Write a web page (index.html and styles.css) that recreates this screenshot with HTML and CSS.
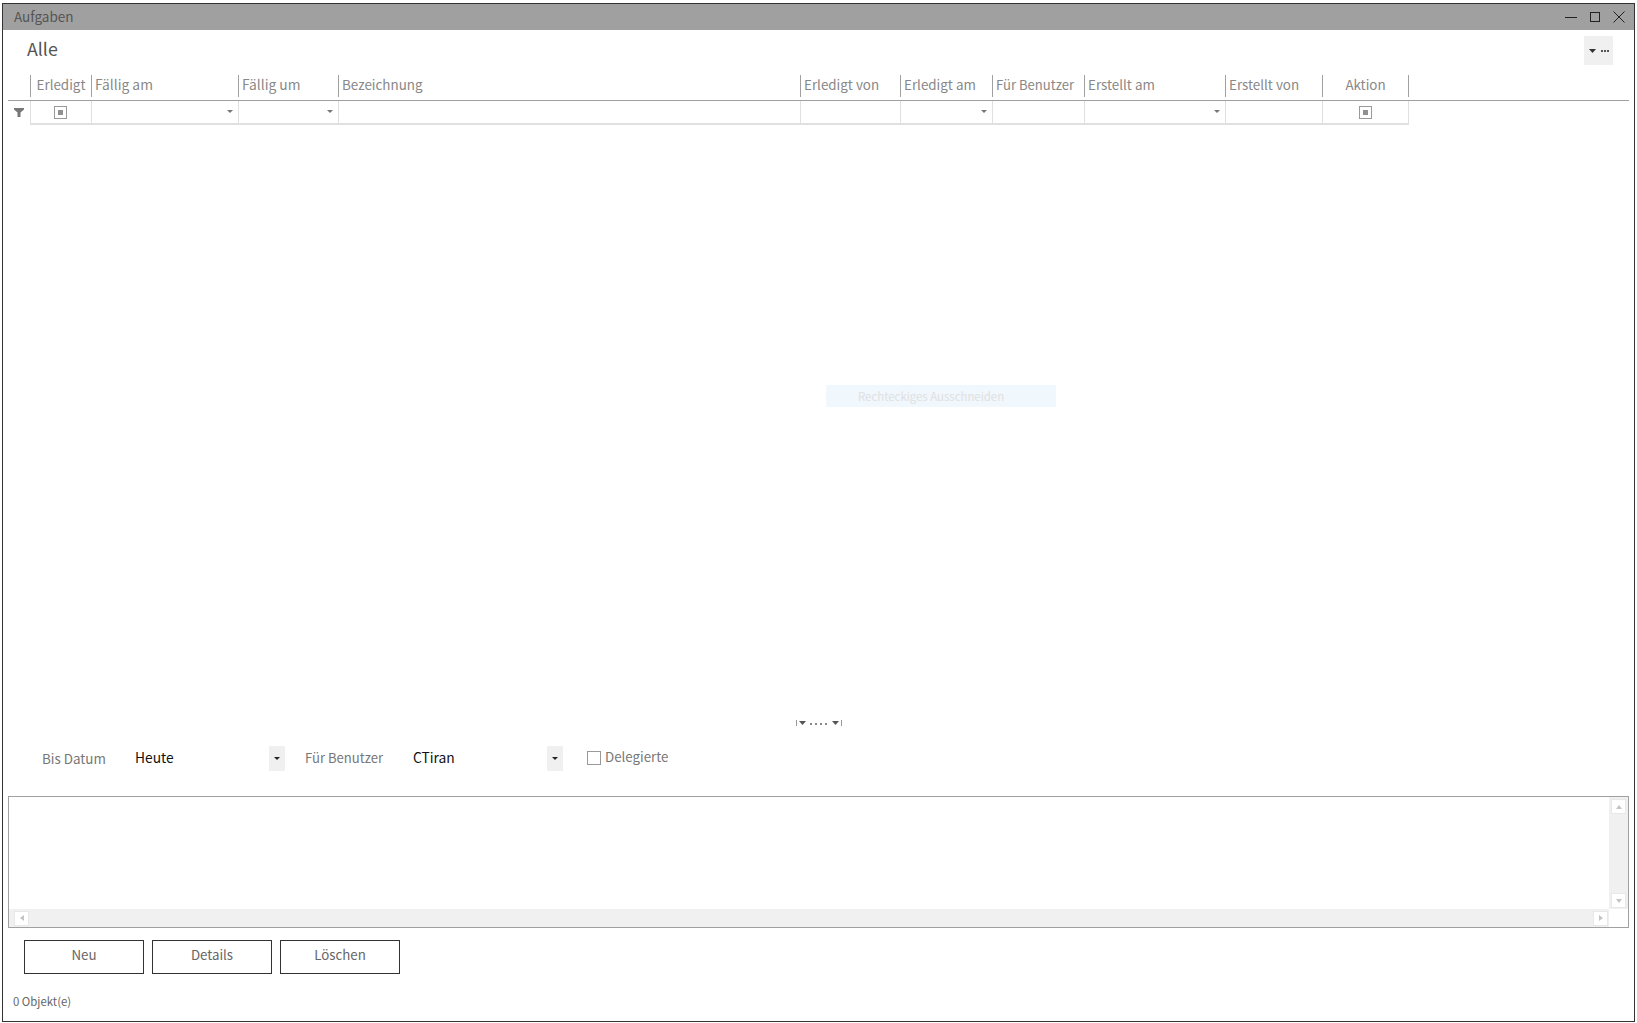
FILE: index.html
```html
<!DOCTYPE html>
<html lang="de">
<head>
    <meta charset="UTF-8">
    <title>Aufgaben</title>
    <link rel="stylesheet" href="styles.css">
</head>
<body>
    <div class="window">
        <div class="titlebar">
            <span class="title">Aufgaben</span>
            <div class="win-buttons">
                <svg width="12" height="12" viewBox="0 0 12 12"><path d="M0 6.500H12" stroke="#222" fill="none"/></svg>
                <svg width="12" height="12" viewBox="0 0 12 12"><rect x="1.500" y="1.500" width="9" height="9" stroke="#222" fill="none"/></svg>
                <svg width="12" height="12" viewBox="0 0 12 12"><path d="M0.500 0.500L11.500 11.500M11.500 0.500L0.500 11.500" stroke="#222" fill="none"/></svg>
            </div>
        </div>

        <div class="view-head">
            <span class="view-name">Alle</span>
            <div class="view-menu">
                <svg width="7" height="4" viewBox="0 0 7 4"><path d="M0 0H7L3.500 4Z" fill="#333"/></svg>
                <svg width="8" height="2" viewBox="0 0 8 2"><path d="M0 0H2V2H0ZM3 0H5V2H3ZM6 0H8V2H6Z" fill="#555"/></svg>
            </div>
        </div>

        <!-- Grid -->
        <div class="grid-area">
            <div class="grid-row grid-header">
                <div class="corner"></div>
                <div class="col c1 center">Erledigt</div>
                <div class="col c2">Fällig am</div>
                <div class="col c3">Fällig um</div>
                <div class="col c4">Bezeichnung</div>
                <div class="col c5">Erledigt von</div>
                <div class="col c6">Erledigt am</div>
                <div class="col c7">Für Benutzer</div>
                <div class="col c8">Erstellt am</div>
                <div class="col c9">Erstellt von</div>
                <div class="col c10 center">Aktion</div>
            </div>
            <div class="grid-row grid-filter">
                <div class="corner">
                    <svg width="10" height="9" viewBox="0 0 10 9"><path d="M0 0H10V1.500L6.500 4.500V9H3.500V4.500L0 1.500Z" fill="#777"/></svg>
                </div>
                <div class="cell c1 center"><span class="tri-check"></span></div>
                <div class="cell c2 drop"><span class="arrow"></span></div>
                <div class="cell c3 drop"><span class="arrow"></span></div>
                <div class="cell c4"></div>
                <div class="cell c5"></div>
                <div class="cell c6 drop"><span class="arrow"></span></div>
                <div class="cell c7"></div>
                <div class="cell c8 drop"><span class="arrow"></span></div>
                <div class="cell c9"></div>
                <div class="cell c10 center"><span class="tri-check"></span></div>
            </div>
            <div class="snip-hint">Rechteckiges Ausschneiden</div>
        </div>

        <div class="splitter">
            <svg width="46" height="6" viewBox="0 0 46 6">
                <path d="M0.500 0V6M45.500 0V6" stroke="#999" fill="none"/>
                <path d="M3 1H10L6.500 5ZM36 1H43L39.500 5Z" fill="#555"/>
                <path d="M14 3h2v2h-2zM19 3h2v2h-2zM24 3h2v2h-2zM29 3h2v2h-2z" fill="#888"/>
            </svg>
        </div>

        <!-- Filter below grid -->
        <div class="filter-bar">
            <span class="label label-date">Bis Datum</span>
            <div class="combo combo-date">
                <span class="value">Heute</span>
                <span class="combo-btn"><span class="arrow dark"></span></span>
            </div>
            <span class="label label-user">Für Benutzer</span>
            <div class="combo combo-user">
                <span class="value">CTiran</span>
                <span class="combo-btn"><span class="arrow dark"></span></span>
            </div>
            <label class="check">
                <span class="box"></span>
                <span class="check-text">Delegierte</span>
            </label>
        </div>

        <div class="detail-box">
            <div class="detail-top">
                <div class="detail-text"></div>
                <div class="vscroll">
                    <span class="sbtn"><span class="sarrow up"></span></span>
                    <span class="sbtn"><span class="sarrow down"></span></span>
                </div>
            </div>
            <div class="detail-bottom">
                <div class="hscroll">
                    <span class="sbtn"><span class="sarrow left"></span></span>
                    <span class="sbtn"><span class="sarrow right"></span></span>
                </div>
                <div class="scroll-corner"></div>
            </div>
        </div>

        <div class="actions">
            <button class="btn">Neu</button>
            <button class="btn">Details</button>
            <button class="btn">Löschen</button>
        </div>

        <div class="status">0 Objekt(e)</div>
    </div>
</body>
</html>
```

FILE: styles.css
```css
html, body {
    margin: 0;
    padding: 0;
    height: 100%;
    background-color: #fff;
}

body {
    padding: 3px 2px 1px 2px;
    box-sizing: border-box;
    font-family: "Noto Sans CJK JP", "Noto Sans", sans-serif;
    color: #666;
}

.window {
    height: 100%;
    box-sizing: border-box;
    border: 1px solid #333;
    display: flex;
    flex-direction: column;
}

/* Title bar */
.titlebar {
    height: 26px;
    flex: none;
    background-color: #a0a0a0;
    display: flex;
    align-items: center;
    justify-content: space-between;
    padding: 0 9px 2px 11px;
    box-sizing: border-box;
}

.title {
    font-size: 13.5px;
    color: #555;
}

.win-buttons {
    display: flex;
    gap: 12px;
    margin-top: 2px;
}

.win-buttons svg {
    display: block;
}

/* View head */
.view-head {
    height: 45px;
    flex: none;
    display: flex;
    justify-content: space-between;
    padding: 6px 21px 0 24px;
    box-sizing: border-box;
}

.view-name {
    font-size: 17.8px;
    line-height: 25px;
    color: #555;
}

.view-menu {
    width: 29px;
    height: 29px;
    background-color: #f0f0f0;
    display: flex;
    align-items: center;
    justify-content: center;
    gap: 5px;
}

/* Grid */
.grid-area {
    flex: 1;
    position: relative;
    padding: 0 5px 0 5px;
}

.grid-row {
    display: flex;
}

.grid-header {
    height: 25px;
    border-bottom: 1px solid #a0a0a0;
}

.corner {
    width: 22px;
    flex: none;
    display: flex;
    align-items: center;
    justify-content: center;
    box-sizing: border-box;
}

.col, .cell {
    flex: none;
    box-sizing: border-box;
    border-left: 1px solid #a0a0a0;
}

.col {
    height: 22px;
    padding-left: 3px;
    font-size: 13.4px;
    line-height: 19px;
    color: #888;
    white-space: nowrap;
}

.col.c2, .col.c3 {
    font-size: 13.8px;
}

.col.c7 {
    font-size: 13.1px;
}

.col.c10 {
    border-right: 1px solid #a0a0a0;
}

.center {
    text-align: center;
    padding-left: 0;
}

.c1 { width: 61px; }
.c2 { width: 147px; }
.c3 { width: 100px; }
.c4 { width: 462px; }
.c5 { width: 100px; }
.c6 { width: 92px; }
.c7 { width: 92px; }
.c8 { width: 141px; }
.c9 { width: 97px; }
.c10 { width: 87px; }

.grid-filter {
    height: 24px;
}

.grid-filter .corner {
    padding-bottom: 2px;
}

.cell {
    height: 24px;
    padding-bottom: 2px;
    border-left-color: #e0e0e0;
    border-bottom: 2px solid #e0e0e0;
    display: flex;
    align-items: center;
}

.cell.center {
    justify-content: center;
    padding-bottom: 0;
}

.cell.c1 {
    padding-right: 1px;
}

.cell.c10 {
    border-right: 1px solid #e0e0e0;
}

.drop {
    justify-content: flex-end;
    padding-right: 5px;
}

.arrow {
    width: 0;
    height: 0;
    border-left: 3px solid transparent;
    border-right: 3px solid transparent;
    border-top: 3px solid #777;
}

.arrow.dark {
    border-top-color: #222;
}

.tri-check {
    width: 13px;
    height: 13px;
    box-sizing: border-box;
    border: 1px solid #999;
    display: flex;
    align-items: center;
    justify-content: center;
}

.tri-check::after {
    content: "";
    width: 5px;
    height: 5px;
    background-color: #909090;
}

/* sits on top of the empty grid */
.snip-hint {
    position: absolute;
    left: 823px;
    top: 310px;
    width: 230px;
    height: 22px;
    padding-left: 32px;
    box-sizing: border-box;
    background-color: #f0f7fd;
    color: #e0e0e0;
    font-size: 11.4px;
    line-height: 22px;
}

.splitter {
    flex: none;
    height: 6px;
    display: flex;
    justify-content: center;
    padding-left: 1px;
    margin-bottom: 20px;
}

.splitter svg {
    display: block;
}

/* Filter bar */
.filter-bar {
    flex: none;
    height: 25px;
    display: flex;
    align-items: center;
    margin-bottom: 25px;
    padding-left: 39px;
    font-size: 13.4px;
}

.label {
    color: #777;
    flex: none;
    margin-top: -2px;
}

.label-date { width: 93px; }
.label-user { width: 108px; font-size: 13.1px; }

.combo {
    flex: none;
    display: flex;
    align-items: center;
    justify-content: space-between;
    height: 25px;
}

.combo-date { width: 150px; margin-right: 20px; }
.combo-user { width: 150px; margin-right: 24px; }

.value {
    color: #111;
    font-size: 13.8px;
    margin-top: -4px;
}

.combo-btn {
    width: 16px;
    height: 25px;
    background-color: #f0f0f0;
    display: flex;
    align-items: center;
    justify-content: center;
}

.check {
    display: flex;
    align-items: center;
    gap: 4px;
    color: #777;
    margin-top: -3px;
    font-size: 13.3px;
}

.check-text {
    margin-top: -1px;
}

.box {
    width: 14px;
    height: 14px;
    border: 1px solid #999;
    box-sizing: border-box;
    margin-top: 2px;
}

/* Detail box */
.detail-box {
    flex: none;
    height: 132px;
    margin: 0 5px 0 5px;
    box-sizing: border-box;
    border: 1px solid #a0a0a0;
    display: flex;
    flex-direction: column;
}

.detail-top {
    flex: 1;
    display: flex;
}

.detail-text {
    flex: 1;
}

.vscroll {
    width: 19px;
    background-color: #f0f0f0;
    display: flex;
    flex-direction: column;
    justify-content: space-between;
    align-items: center;
    padding: 2px 0 1px;
    box-sizing: border-box;
}

.detail-bottom {
    height: 18px;
    display: flex;
}

.hscroll {
    flex: 1;
    background-color: #f0f0f0;
    display: flex;
    justify-content: space-between;
    align-items: center;
    padding: 0 1px 0 5px;
}

.scroll-corner {
    width: 19px;
}

.sbtn {
    width: 15px;
    height: 15px;
    background-color: #fff;
    border: 1px solid #e8e8e8;
    box-sizing: border-box;
    display: flex;
    align-items: center;
    justify-content: center;
}

.sarrow {
    width: 0;
    height: 0;
}

.sarrow.up {
    border-left: 3px solid transparent;
    border-right: 3px solid transparent;
    border-bottom: 4px solid #c4c4c4;
}

.sarrow.down {
    border-left: 3px solid transparent;
    border-right: 3px solid transparent;
    border-top: 4px solid #c4c4c4;
}

.sarrow.left {
    border-top: 3px solid transparent;
    border-bottom: 3px solid transparent;
    border-right: 4px solid #c4c4c4;
}

.sarrow.right {
    border-top: 3px solid transparent;
    border-bottom: 3px solid transparent;
    border-left: 4px solid #c4c4c4;
}

/* Buttons */
.actions {
    flex: none;
    display: flex;
    gap: 8px;
    padding: 12px 0 0 21px;
}

.btn {
    width: 120px;
    height: 34px;
    padding: 0 0 5px;
    background-color: #fff;
    border: 1px solid #333;
    font-family: inherit;
    font-size: 13.3px;
    color: #666;
}

.status {
    flex: none;
    margin-top: 18px;
    padding: 0 0 11px 10px;
    font-size: 11.4px;
    line-height: 18px;
    color: #666;
}
```
